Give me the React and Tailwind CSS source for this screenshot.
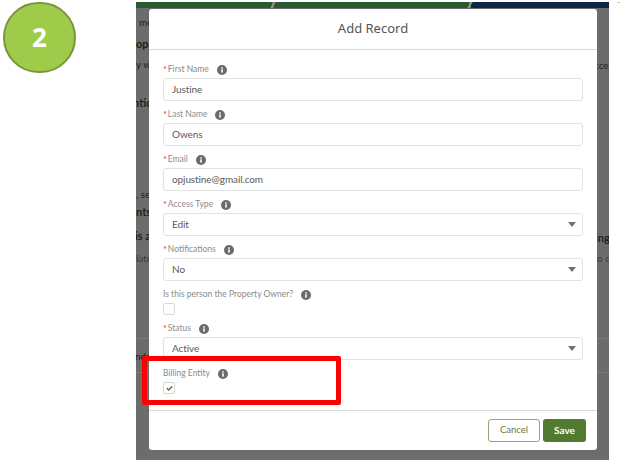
import React from 'react'
import { Check } from 'lucide-react'

function InfoIcon() {
  return (
    <svg width="10" height="10" viewBox="0 0 10 10" className="shrink-0">
      <circle cx="5" cy="5" r="5" fill="#6b6b6b" />
      <rect x="4.2" y="4.4" width="1.6" height="3.2" fill="#fff" />
      <rect x="4.2" y="2.3" width="1.6" height="1.4" fill="#fff" />
    </svg>
  )
}

function Label({ text, required }) {
  return (
    <div className="h-[15px] flex items-center text-[8.5px] leading-none text-[#8c8c8c]">
      {required && <span className="text-[#e8304a] mr-px text-[9px]">*</span>}
      <span>{text}</span>
      <span className="ml-[8px]"><InfoIcon /></span>
    </div>
  )
}

function Field({ label, value, select }) {
  return (
    <div className="h-[45px]">
      <Label text={label} required />
      <div className="mt-[1px] h-[23px] w-[420px] flex items-center justify-between pl-[8px] pr-[6px] rounded-[3px] border border-[#e2e2e2] text-[10px] tracking-[-0.1px] text-[#5a5a5a]">
        <span className="pb-px">{value}</span>
        {select && <span className="w-0 h-0 border-l-[4px] border-r-[4px] border-t-[5px] border-l-transparent border-r-transparent border-t-[#707070]" />}
      </div>
    </div>
  )
}

function Clip({ text, bold, className = '' }) {
  return (
    <div className={`h-[12px] leading-[12px] whitespace-nowrap ${bold ? 'text-[11px] font-bold' : 'text-[10px]'} ${className}`}>{text}</div>
  )
}

export default function App() {
  return (
    <div className="relative w-[620px] h-[469px] bg-white overflow-hidden flex items-start font-['Lato',sans-serif]">
      {/* step badge */}
      <div className="ml-[3px] mt-[2px] w-[73px] h-[71px] shrink-0 rounded-full bg-[#9fcb4b] border-2 border-[#76983a] flex items-center justify-center text-white text-[26px] font-bold font-['Noto_Sans',sans-serif]">2</div>

      {/* page behind the modal */}
      <div className="ml-[60px] mt-[2px] w-[473px] h-[458px] shrink-0 bg-[#6c6c6c] flex flex-col">
        <div className="flex h-[6px] shrink-0">
          <div className="w-[136px] bg-[#2a5a30]" />
          <div className="w-[2px] bg-[#8a9a8c] -skew-x-[30deg]" />
          <div className="w-[195px] bg-[#2a5a30]" />
          <div className="w-[2px] bg-[#8a9a8c] -skew-x-[30deg]" />
          <div className="flex-1 bg-[#0c2644]" />
        </div>
        <div className="flex flex-1 pt-px min-h-0">
          {/* left sliver of the page */}
          <div className="w-[13px] shrink-0 overflow-hidden flex flex-col text-[#1e1e1e]">
            <Clip text="mu" className="mt-[7px] pl-[3px]" />
            <Clip text="opli" bold className="mt-[10px]" />
            <Clip text="y wl" className="mt-[8px]" />
            <Clip text="ntic" bold className="mt-[27px] -ml-[3px]" />
            <Clip text=", se" className="mt-[79px]" />
            <Clip text="nts" bold className="mt-[6px]" />
            <Clip text="is a" bold className="mt-[12px] -ml-[1px]" />
            <Clip text="late" className="mt-[10px] text-[#3a3a3a]" />
            <div className="mt-[74px] h-[35px] border-y border-[#7a7a7a] flex items-center -mx-px">
              <Clip text="nda" />
            </div>
          </div>

          {/* modal */}
          <div className="w-[448px] h-[441px] shrink-0 bg-white rounded-[3px] flex flex-col">
            <div className="h-[41px] shrink-0 border-b border-[#d8d8d8] flex items-center justify-center text-[13px] text-[#555] font-['Noto_Sans',sans-serif]">Add Record</div>
            <div className="flex-1 pl-[14px] pt-[12px]">
              <Field label="First Name" value="Justine" />
              <Field label="Last Name" value="Owens" />
              <Field label="Email" value="opjustine@gmail.com" />
              <Field label="Access Type" value="Edit" select />
              <Field label="Notifications" value="No" select />
              <div className="h-[34px]">
                <Label text="Is this person the Property Owner?" />
                <div className="mt-[1px] w-[12px] h-[12px] rounded-[2px] border border-[#d8d8d8]" />
              </div>
              <Field label="Status" value="Active" select />
              <div>
                <Label text="Billing Entity" />
                <div className="mt-[1px] w-[12px] h-[12px] rounded-[2px] border border-[#d8d8d8] flex items-center justify-center">
                  <Check size={7} strokeWidth={5} className="text-[#4f7a2c]" />
                </div>
              </div>
            </div>
            <div className="h-[40px] shrink-0 border-t border-[#d8d8d8] flex items-center justify-end gap-[3px] pr-[11px]">
              <button className="w-[52px] h-[23px] rounded-[3px] border border-[#8aa878] bg-white text-[9.5px] text-[#5b7f4a]">Cancel</button>
              <button className="w-[43px] h-[23px] rounded-[3px] bg-[#527a30] text-[10px] font-bold text-white">Save</button>
            </div>
          </div>

          {/* right sliver of the page */}
          <div className="w-[12px] shrink-0 overflow-hidden flex flex-col text-[#1e1e1e]">
            <Clip text="cce" className="mt-[50px] -ml-[3px]" />
            <Clip text="ing" bold className="mt-[161px] -ml-[2px]" />
            <Clip text="o de" className="mt-[8px] text-[#3a3a3a]" />
            <div className="mt-[74px] h-[35px] border-y border-[#7a7a7a]" />
          </div>
        </div>
      </div>

      <div className="ml-[8px] mt-[2px] w-[3px] h-px bg-[#cccccc]" />

      {/* red highlight */}
      <div className="absolute left-[142px] top-[356px] w-[199px] h-[49px] border-[5px] border-[#fe0000] rounded-[2px]" />
    </div>
  )
}
